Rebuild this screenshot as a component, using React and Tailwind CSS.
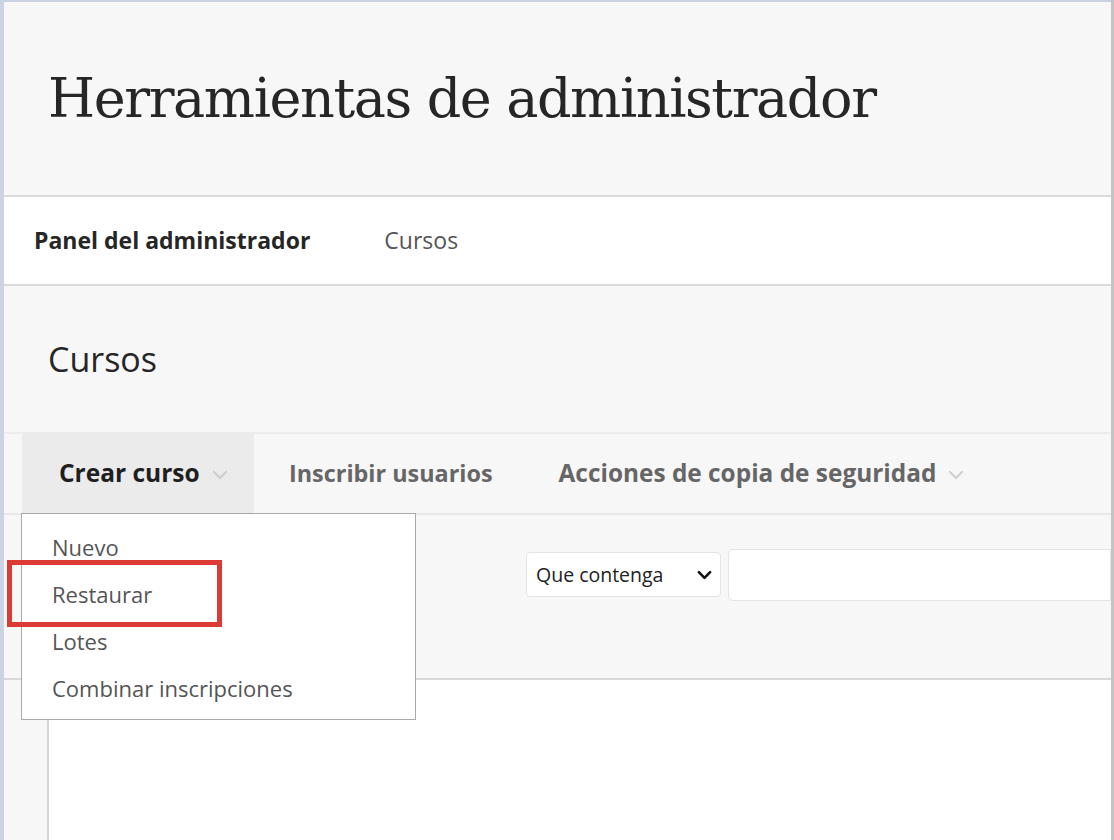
import React from 'react';

function Chevron({ className, strokeWidth = 2.2 }) {
  return (
    <svg viewBox="0 0 16 10" className={className} fill="none" stroke="currentColor" strokeWidth={strokeWidth} strokeLinecap="round" strokeLinejoin="round">
      <path d="M2 2l6 6 6-6" />
    </svg>
  );
}

export default function App() {
  const menuItems = ['Nuevo', 'Restaurar', 'Lotes', 'Combinar inscripciones'];

  return (
    <div className="relative flex h-[840px] w-[1114px] overflow-hidden bg-white" style={{ fontFamily: '"Open Sans", "Noto Sans", sans-serif' }}>
      {/* left frame */}
      <div className="w-[4px] shrink-0 bg-[#ccd4e4]" />

      <div className="flex flex-1 flex-col border-t-2 border-[#c9d1e2]">
        {/* page header */}
        <div className="flex h-[195px] shrink-0 items-center border-b-2 border-[#dadada] bg-[#f7f7f7] pl-[44px]">
          <h1 className="text-[54px] leading-none tracking-[-1.4px] text-[#262626]" style={{ fontFamily: '"DejaVu Serif", "Liberation Serif", serif' }}>
            Herramientas de administrador
          </h1>
        </div>

        {/* breadcrumbs */}
        <div className="flex h-[89px] shrink-0 items-center border-b-2 border-[#dadada] bg-white pl-[30px] text-[23px]">
          <span className="font-bold text-[#262626]">Panel del administrador</span>
          <span className="ml-[74px] text-[#555]">Cursos</span>
        </div>

        {/* section title */}
        <div className="flex h-[148px] shrink-0 items-center border-b-2 border-[#ececec] bg-[#f7f7f7] pl-[44px]">
          <h2 className="text-[34px] text-[#262626]">Cursos</h2>
        </div>

        {/* action bar */}
        <div className="flex h-[81px] shrink-0 items-stretch border-b-2 border-[#e8e8e8] bg-[#f7f7f7] pl-[18px] font-bold">
          <div className="flex w-[232px] items-center gap-[12px] bg-[#ebebeb] pl-[37px] text-[24.5px] text-[#1f1f1f]">
            Crear curso
            <Chevron className="mt-[3px] h-[10px] w-[16px] text-[#cfcfcf]" />
          </div>
          <div className="flex items-center pl-[35px] text-[23.4px] text-[#666]">Inscribir usuarios</div>
          <div className="flex items-center gap-[12px] pl-[66px] text-[24.4px] text-[#666]">
            Acciones de copia de seguridad
            <Chevron className="mt-[3px] h-[10px] w-[16px] text-[#cfcfcf]" />
          </div>
        </div>

        {/* search */}
        <div className="flex h-[165px] shrink-0 items-start border-b-2 border-[#d8d8d8] bg-[#f7f7f7] pl-[522px] pt-[34px]">
          <div className="mt-[3px] flex h-[45px] w-[195px] items-center justify-between rounded-[4px] border border-[#e4e4e4] bg-white pl-[9px] pr-[8px] text-[19.5px] text-[#222]">
            Que contenga
            <Chevron className="h-[10px] w-[15px] text-[#111]" strokeWidth={2.8} />
          </div>
          <div className="ml-[7px] h-[52px] flex-1 rounded-l-[5px] border border-[#e4e4e4] bg-white" />
        </div>

        {/* list area */}
        <div className="flex flex-1">
          <div className="w-[45px] border-r-2 border-[#d4d4d4] bg-[#f7f7f7]" />
          <div className="flex-1 bg-white" />
        </div>
      </div>

      {/* right frame */}
      <div className="w-[3px] shrink-0 bg-[#c4c4c4]" />

      {/* dropdown menu */}
      <div className="absolute left-[21px] top-[513px] flex h-[207px] w-[395px] flex-col border border-[#aaaaaa] bg-white pl-[30px] pt-[17px] text-[22px] text-[#555]">
        {menuItems.map((item) => (
          <div key={item} className="h-[47px] leading-[32px]">{item}</div>
        ))}
      </div>

      {/* highlight */}
      <div className="absolute left-[7px] top-[560px] h-[67px] w-[215px] border-[5px] border-[#dc3a35]" />
    </div>
  );
}
